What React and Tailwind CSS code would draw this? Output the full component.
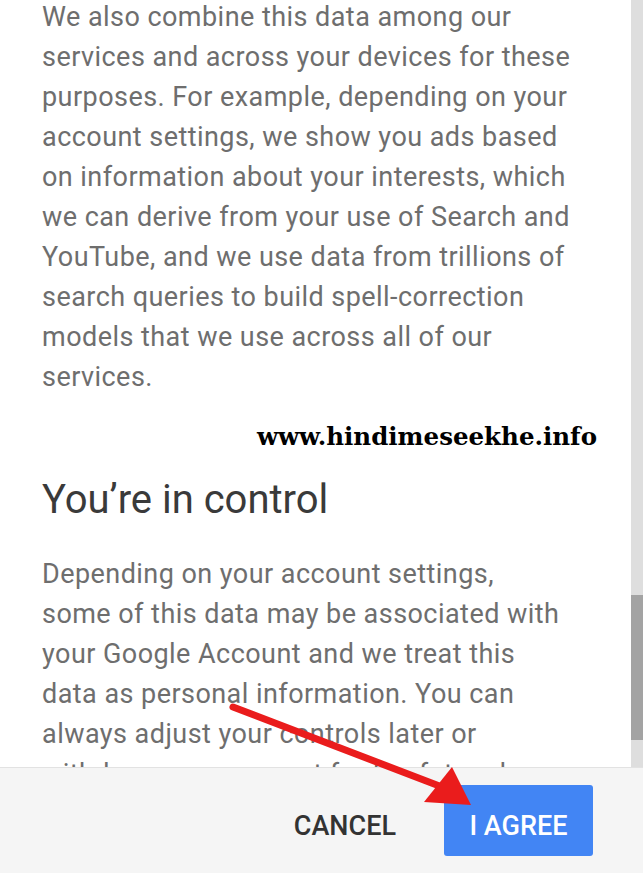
import React from "react";

const intro =
  "We also combine this data among our services and across your devices for these purposes. For example, depending on your account settings, we show you ads based on information about your interests, which we can derive from your use of Search and YouTube, and we use data from trillions of search queries to build spell-correction models that we use across all of our services.";

const control =
  "Depending on your account settings, some of this data may be associated with your Google Account and we treat this data as personal information. You can always adjust your controls later or withdraw your consent for the future by visiting My Account (myaccount.google.com).";

function Arrow() {
  return (
    <svg
      className="absolute left-0 top-0 pointer-events-none"
      width="643"
      height="873"
      viewBox="0 0 643 873"
    >
      <line
        x1="233"
        y1="707"
        x2="442"
        y2="787"
        stroke="#ea1c1c"
        strokeWidth="7"
        strokeLinecap="round"
      />
      <polygon points="424,802 452,767 471,805" fill="#ea1c1c" />
    </svg>
  );
}

export default function App() {
  return (
    <div
      className="relative w-[643px] h-[873px] overflow-hidden bg-white flex flex-col"
      style={{ fontFamily: "Roboto, 'Noto Sans', sans-serif" }}
    >
      <div className="flex h-[767px] overflow-hidden">
        <div className="flex-1 pl-[42px] pr-[53px]">
          <p className="mt-[-3px] text-[27px] leading-[40px] tracking-[0.45px] text-[#6e6e6e]">
            {intro}
          </p>
          <div
            className="mt-[20px] mr-[-19px] h-[40px] text-right text-[24.5px] leading-[40px] font-bold text-black"
            style={{ fontFamily: "'DejaVu Serif', serif" }}
          >
            www.hindimeseekhe.info
          </div>
          <h2 className="mt-[19px] text-[40px] leading-[48px] text-[#3a3a3a]">
            You’re in control
          </h2>
          <p className="mt-[30px] max-w-[522px] text-[27px] leading-[40px] tracking-[0.45px] text-[#6e6e6e]">
            {control}
          </p>
        </div>
        <div className="w-[12px] bg-[#dedede] flex flex-col">
          <div className="h-[595px]" />
          <div className="h-[145px] bg-[#a3a3a3]" />
        </div>
      </div>
      <div className="flex-1 bg-[#f5f5f5] border-t border-[#e2e2e2] flex items-center justify-end pr-[50px]">
        <button className="pt-[11px] mr-[48px] text-[27px] font-medium text-[#333333]">
          CANCEL
        </button>
        <button className="pt-[11px] w-[149px] h-[71px] rounded-[3px] bg-[#4285f4] text-white text-[27px] font-medium">
          I AGREE
        </button>
      </div>
      <Arrow />
    </div>
  );
}
